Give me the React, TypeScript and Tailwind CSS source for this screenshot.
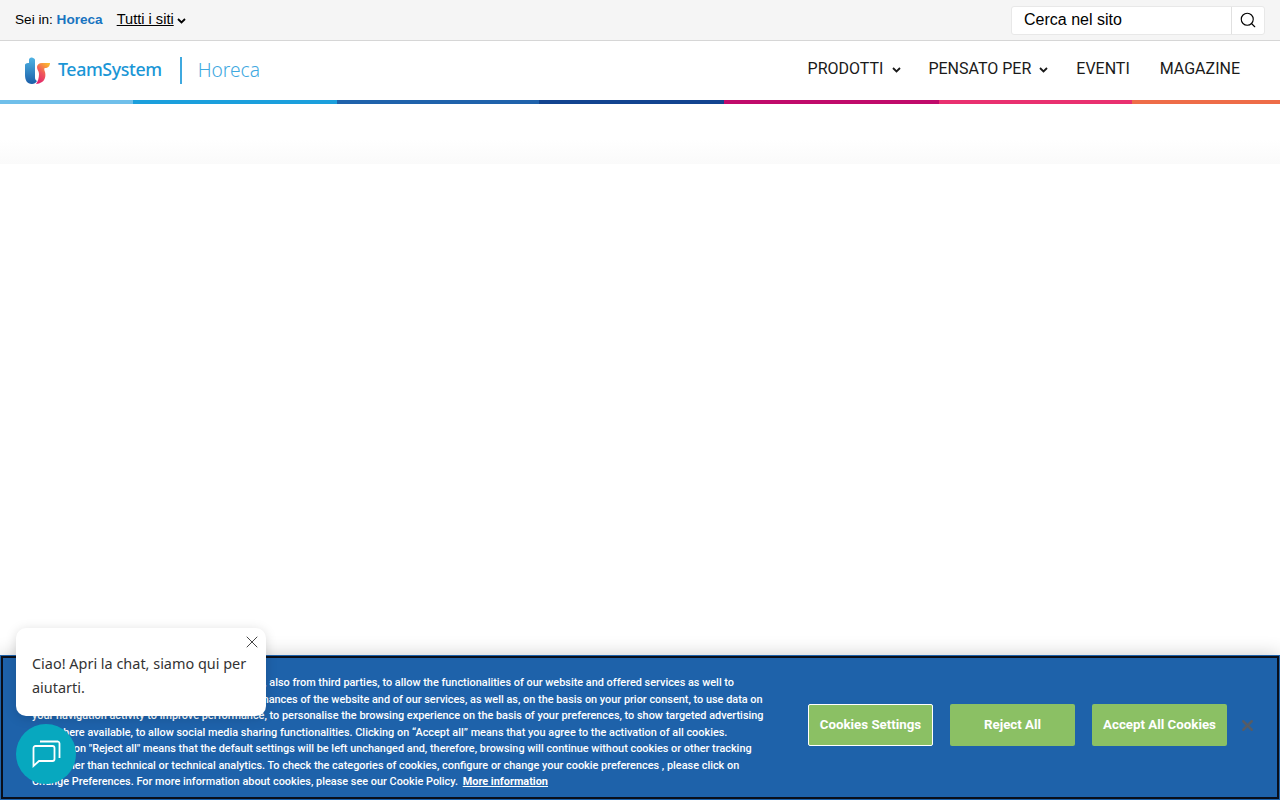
import { Search, X } from "lucide-react";

const stripes = [
  "w-[133px] bg-[#6fbfea]",
  "w-[204px] bg-[#1b9fdc]",
  "w-[202px] bg-[#1f62ab]",
  "w-[185px] bg-[#124490]",
  "w-[215px] bg-[#c00a6b]",
  "w-[193px] bg-[#e9306f]",
  "flex-1 bg-[#ee6c48]",
];

const cookieLines = [
  "Our website uses technical and profiled cookies, also from third parties, to allow the functionalities of our website and offered services as well to",
  "analyse traffic and to improve the global performances of the website and of our services, as well as, on the basis on your prior consent, to use data on",
  "your navigation activity to improve performance, to personalise the browsing experience on the basis of your preferences, to show targeted advertising",
  "also where available, to allow social media sharing functionalities. Clicking on “Accept all” means that you agree to the activation of all cookies.",
  "Clicking on \"Reject all\" means that the default settings will be left unchanged and, therefore, browsing will continue without cookies or other tracking",
  "tools other than technical or technical analytics. To check the categories of cookies, configure or change your cookie preferences , please click on",
];

const Chevron = ({ className }: { className?: string }) => (
  <svg width="9" height="6" viewBox="0 0 9 6" fill="none" stroke="currentColor" strokeWidth="1.8" className={className}>
    <path d="M1 1l3.5 3.5L8 1" />
  </svg>
);

const Logo = () => (
  <div className="flex items-center">
    <svg width="28" height="27" viewBox="0 0 28 27" className="mr-[6px]">
      <defs>
        <linearGradient id="tsBlue" x1="0" y1="0" x2="0" y2="1">
          <stop offset="0" stopColor="#4fb3e3" />
          <stop offset="1" stopColor="#1a5ea8" />
        </linearGradient>
        <linearGradient id="tsPink" x1="0.8" y1="0" x2="0.2" y2="1">
          <stop offset="0" stopColor="#fbb82e" />
          <stop offset="0.5" stopColor="#f0585a" />
          <stop offset="1" stopColor="#e0206f" />
        </linearGradient>
      </defs>
      <path d="M1 8c0-1 1-2 3-2h1V3c0-2 2-3 4-2 1 0 2 1 2 2v17c0 3 1 3 2 4-1 2-3 3-5 3C3 27 1 23 1 18z" fill="url(#tsBlue)" />
      <path d="M13 10c0-2 2-4 5-4h8c0 3-2 5-5 5-1 0-1 2 0 4 1 4 0 8-3 10-2 1-4 2-6 2 2-3 3-6 3-10 0-3-2-4-2-7z" fill="url(#tsPink)" />
    </svg>
    <span className="font-['Noto_Sans',sans-serif] text-[17.8px] font-medium leading-none text-[#1a96d6] tracking-[-0.4px]">TeamSystem</span>
    <div className="ml-[18px] mr-[16px] h-[27px] w-[2px] bg-[#3fa9df]" />
    <span className="font-['Noto_Sans',sans-serif] font-light text-[19.2px] leading-none text-[#3fa9df]">Horeca</span>
  </div>
);

const App = () => {
  return (
    <div className="relative h-screen overflow-hidden bg-white">
      {/* top bar */}
      <div className="flex h-[41px] items-center justify-between border-b border-[#d6d6d6] bg-[#f5f5f5] pl-[15px] pr-[15px] font-['Liberation_Sans',sans-serif] text-black">
        <div className="flex items-center">
          <span className="text-[13.6px]">Sei in: <b className="text-[#1874c0]">Horeca</b></span>
          <span className="ml-[14px] text-[14.6px] underline">Tutti i siti</span>
          <Chevron className="ml-[3px] mt-[2px]" />
        </div>
        <div className="flex h-[29px] w-[254px] rounded-[3px] border border-[#e8e8e8] bg-white">
          <div className="flex flex-1 items-center pl-[12px] text-[16px]">Cerca nel sito</div>
          <div className="flex w-[33px] items-center justify-center border-l border-[#e0e0e0]">
            <Search size={18} strokeWidth={1.5} />
          </div>
        </div>
      </div>

      {/* main nav */}
      <div className="flex h-[59px] items-center justify-between pl-[24px] pr-[40px]">
        <div className="-mt-[1px]">
          <Logo />
        </div>
        <nav className="-mt-[4px] flex items-center font-['Roboto',sans-serif] text-[16px] text-[#1a1a1a]">
          <span className="flex items-center gap-[9px]">PRODOTTI <Chevron className="mt-[2px]" /></span>
          <span className="ml-[27px] flex items-center gap-[8px]">PENSATO PER <Chevron className="mt-[2px]" /></span>
          <span className="ml-[28px]">EVENTI</span>
          <span className="ml-[30px]">MAGAZINE</span>
        </nav>
      </div>

      {/* coloured stripes */}
      <div className="flex h-[4px]">
        {stripes.map((s) => (
          <div key={s} className={s} />
        ))}
      </div>

      {/* fade below the header */}
      <div className="mt-[36px] h-[24px] bg-gradient-to-b from-white to-[#fafafa]" />

      {/* cookie banner */}
      <div className="absolute inset-x-0 bottom-0 flex h-[145px] items-start bg-[#1e62aa] pt-[20px] font-['Roboto',sans-serif] text-white shadow-[0_0_18px_rgba(0,0,0,0.2)] outline-2 -outline-offset-3 outline-[#0a0f1a]">
        <div className="ml-[32px] w-[750px] text-[10.9px] font-medium leading-[16.5px] whitespace-nowrap">
          {cookieLines.map((l) => (
            <div key={l}>{l}</div>
          ))}
          <div>
            Change Preferences. For more information about cookies, please see our Cookie Policy.{" "}
            <span className="ml-[2px] font-bold underline">More information</span>
          </div>
        </div>
        <div className="ml-[26px] mt-[29px] flex items-center text-[13.3px] font-bold">
          <button className="h-[42px] w-[125px] rounded-[2px] border border-white bg-[#8bc064]">Cookies Settings</button>
          <button className="ml-[17px] h-[42px] w-[125px] rounded-[2px] bg-[#8bc064]">Reject All</button>
          <button className="ml-[17px] h-[42px] w-[135px] rounded-[2px] bg-[#8bc064]">Accept All Cookies</button>
          <X size={17} strokeWidth={3.5} className="ml-[12px] text-[#555c66]" />
        </div>
      </div>

      {/* chat bubble */}
      <div className="absolute left-[16px] top-[628px] h-[88px] w-[250px] rounded-[10px] bg-white px-[16px] pt-[24px] font-['Noto_Sans',sans-serif] text-[14.45px] leading-[24px] text-[#333] shadow-[0_2px_12px_rgba(0,0,0,0.15)]">
        Ciao! Apri la chat, siamo qui per aiutarti.
        <X size={20} strokeWidth={1.1} className="absolute right-[4px] top-[4px] text-[#333]" />
      </div>

      {/* chat launcher */}
      <div className="absolute left-[16px] top-[724px] flex h-[60px] w-[60px] items-center justify-center rounded-full bg-[#07a8bf]">
        <svg width="30" height="30" viewBox="0 0 30 30" fill="none" stroke="white" strokeWidth="1.8">
          <path d="M2.5 9a2 2 0 0 1 2-2h17a2 2 0 0 1 2 2v11a2 2 0 0 1-2 2H8l-5.5 5z" />
          <path d="M9 2.5h18a2 2 0 0 1 1.5 2V19" />
        </svg>
      </div>
    </div>
  );
};

export default App;
